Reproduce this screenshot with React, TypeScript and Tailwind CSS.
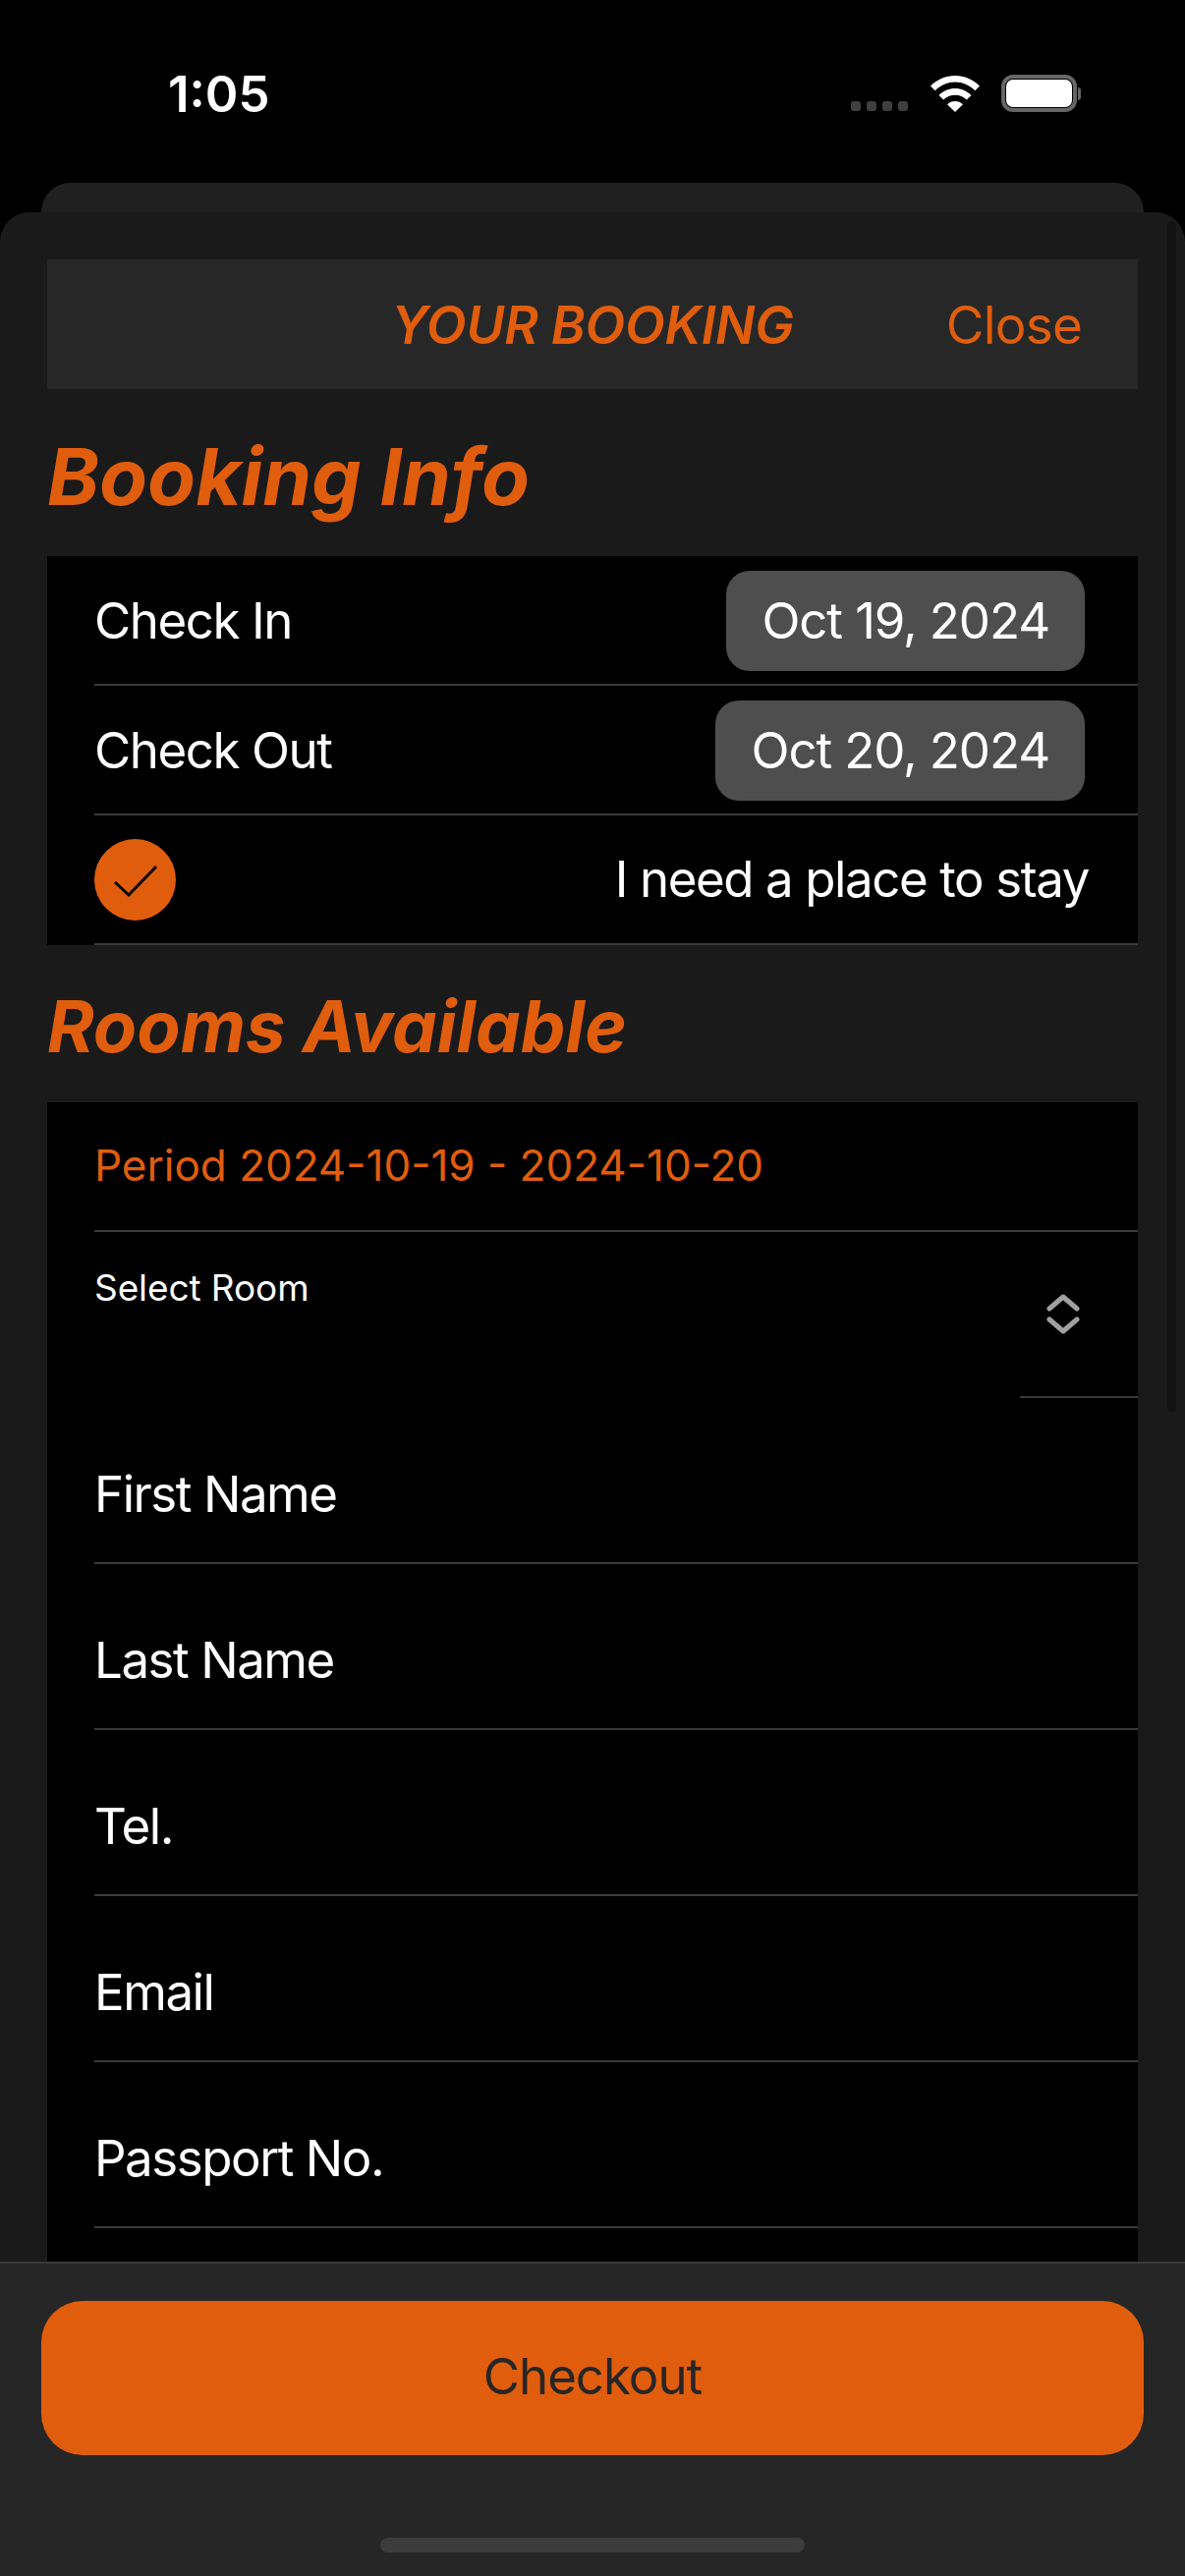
import React from 'react';

const FormRow = ({ label }: { label: string }) => (
  <div className="flex h-[169px] items-center border-b-[2px] border-[#3a3a3a] pt-[30px] text-[51px] tracking-[-1.45px] text-white">
    {label}
  </div>
);

const DateRow = ({ label, value }: { label: string; value: string }) => (
  <div className="flex h-[132px] items-center justify-between border-b-[2px] border-[#3a3a3a] pt-[2px] pr-[54px] text-[51px] tracking-[-1.45px] text-white">
    <span>{label}</span>
    <span className="flex h-[102px] items-center rounded-[24px] bg-[#4e4e4e] px-[36px] tracking-[-1.1px]">{value}</span>
  </div>
);

const App = () => {
  return (
    <div className="flex h-[2622px] w-[1206px] flex-col overflow-hidden bg-black font-[Inter,sans-serif]">
      {/* Status bar */}
      <div className="flex h-[186px] shrink-0 items-start justify-between pl-[171px] pr-[106px] pt-[64px]">
        <span className="text-[51px] leading-[63px] font-semibold text-white">1:05</span>
        <div className="flex items-end gap-[22px] pt-[12px]">
          <div className="flex gap-[6px] pb-[1px] pr-[1px]">
            <span className="h-[10px] w-[10px] rounded-[3px] bg-[#3f3f3f]" />
            <span className="h-[10px] w-[10px] rounded-[3px] bg-[#3f3f3f]" />
            <span className="h-[10px] w-[10px] rounded-[3px] bg-[#3f3f3f]" />
            <span className="h-[10px] w-[10px] rounded-[3px] bg-[#3f3f3f]" />
          </div>
          <svg width="50" height="37" viewBox="0 0 50 37" fill="#fff">
            <path d="M25 0C15.5 0 7 3.7 0 10.5l4.6 4.8C10.5 9.7 17.5 6.6 25 6.6s14.5 3.1 20.4 8.7l4.6-4.8C43 3.7 34.5 0 25 0z" />
            <path d="M25 13c-6.2 0-11.9 2.400-16.500 6.900l4.700 4.700C16.400 21.500 20.500 19.700 25 19.700s8.600 1.800 11.800 4.900l4.700-4.700C36.900 15.400 31.200 13 25 13z" />
            <path d="M25 26c-3.100 0-5.900 1.200-8 3.300L25 37l8-7.700C30.900 27.200 28.100 26 25 26z" />
          </svg>
          <div className="flex items-center">
            <div className="h-[38px] w-[77px] rounded-[12px] border-[4px] border-[#666666] p-[1px]">
              <div className="h-full w-full rounded-[7px] bg-white" />
            </div>
            <span className="ml-[1px] h-[13px] w-[3px] rounded-r-[3px] bg-[#666666]" />
          </div>
        </div>
      </div>

      {/* Sheet behind */}
      <div className="mx-[42px] h-[30px] shrink-0 rounded-t-[30px] bg-[#202020]" />

      {/* Sheet */}
      <div className="relative flex min-h-0 flex-1 flex-col overflow-hidden rounded-t-[30px] bg-[#1a1a1a]">
        <div className="absolute right-[9px] top-[9px] h-[1212px] w-[9px] rounded-full bg-[#131313]" />

        <div className="min-h-0 flex-1 overflow-hidden px-[48px] pt-[48px]">
          <div className="relative flex h-[132px] items-center justify-center bg-[#272727] pt-[4px]">
            <span className="text-[53px] font-semibold tracking-[-0.2px] text-[#e05d0d] italic">YOUR BOOKING</span>
            <span className="absolute right-[57px] text-[53px] tracking-[-0.8px] text-[#e05d0d]">Close</span>
          </div>

          <h1 className="flex h-[170px] items-center pt-[8px] text-[80px] font-bold text-[#e05d0d] italic">Booking Info</h1>

          <div className="bg-black pl-[48px]">
            <DateRow label="Check In" value="Oct 19, 2024" />
            <DateRow label="Check Out" value="Oct 20, 2024" />
            <div className="flex h-[132px] items-center justify-between border-b-[2px] border-[#3a3a3a] pr-[50px] text-[51px] tracking-[-1.4px] text-white">
              <span className="flex h-[83px] w-[83px] items-center justify-center rounded-full bg-[#e05d0d]">
                <svg width="83" height="83" viewBox="0 0 83 83" fill="none" stroke="#000" strokeWidth="3">
                  <path d="M21 44 L35 57 L63 28" />
                </svg>
              </span>
              <span>I need a place to stay</span>
            </div>
          </div>

          <h2 className="flex h-[160px] items-center pt-[6px] text-[72.500px] font-bold text-[#e05d0d] italic">Rooms Available</h2>

          <div className="bg-black pl-[48px]">
            <div className="flex h-[132px] items-center border-b-[2px] border-[#3a3a3a] pb-[2px] text-[44px] text-[#e05d0d]">
              Period 2024-10-19 - 2024-10-20
            </div>
            <div className="flex h-[169px] justify-between">
              <span className="pt-[29px] text-[37px] tracking-[-0.1px] text-white">Select Room</span>
              <div className="flex w-[120px] items-center justify-start border-b-[2px] border-[#3a3a3a] pl-[27px]">
                <svg width="34" height="41" viewBox="0 0 34 41" fill="none" stroke="#a0a0a0" strokeWidth="5" strokeLinecap="round" strokeLinejoin="round">
                  <path d="M3 15 L17 3 L31 15" />
                  <path d="M3 26 L17 38 L31 26" />
                </svg>
              </div>
            </div>
            <FormRow label="First Name" />
            <FormRow label="Last Name" />
            <FormRow label="Tel." />
            <FormRow label="Email" />
            <FormRow label="Passport No." />
            <div className="h-[200px]" />
          </div>
        </div>

        {/* Checkout footer */}
        <div className="relative flex h-[320px] shrink-0 flex-col items-center border-t-[2px] border-[#3a3a3a] bg-[#262626] px-[42px] pt-[38px]">
          <button className="flex h-[157px] w-full items-center justify-center rounded-[42px] bg-[#e05d0d] pb-[2px] text-[51px] tracking-[-1px] text-[#262626]">
            Checkout
          </button>
          <div className="mt-[84px] h-[15px] w-[432px] rounded-[8px] bg-[#3c3c3c]" />
        </div>
      </div>
    </div>
  );
};

export default App;
